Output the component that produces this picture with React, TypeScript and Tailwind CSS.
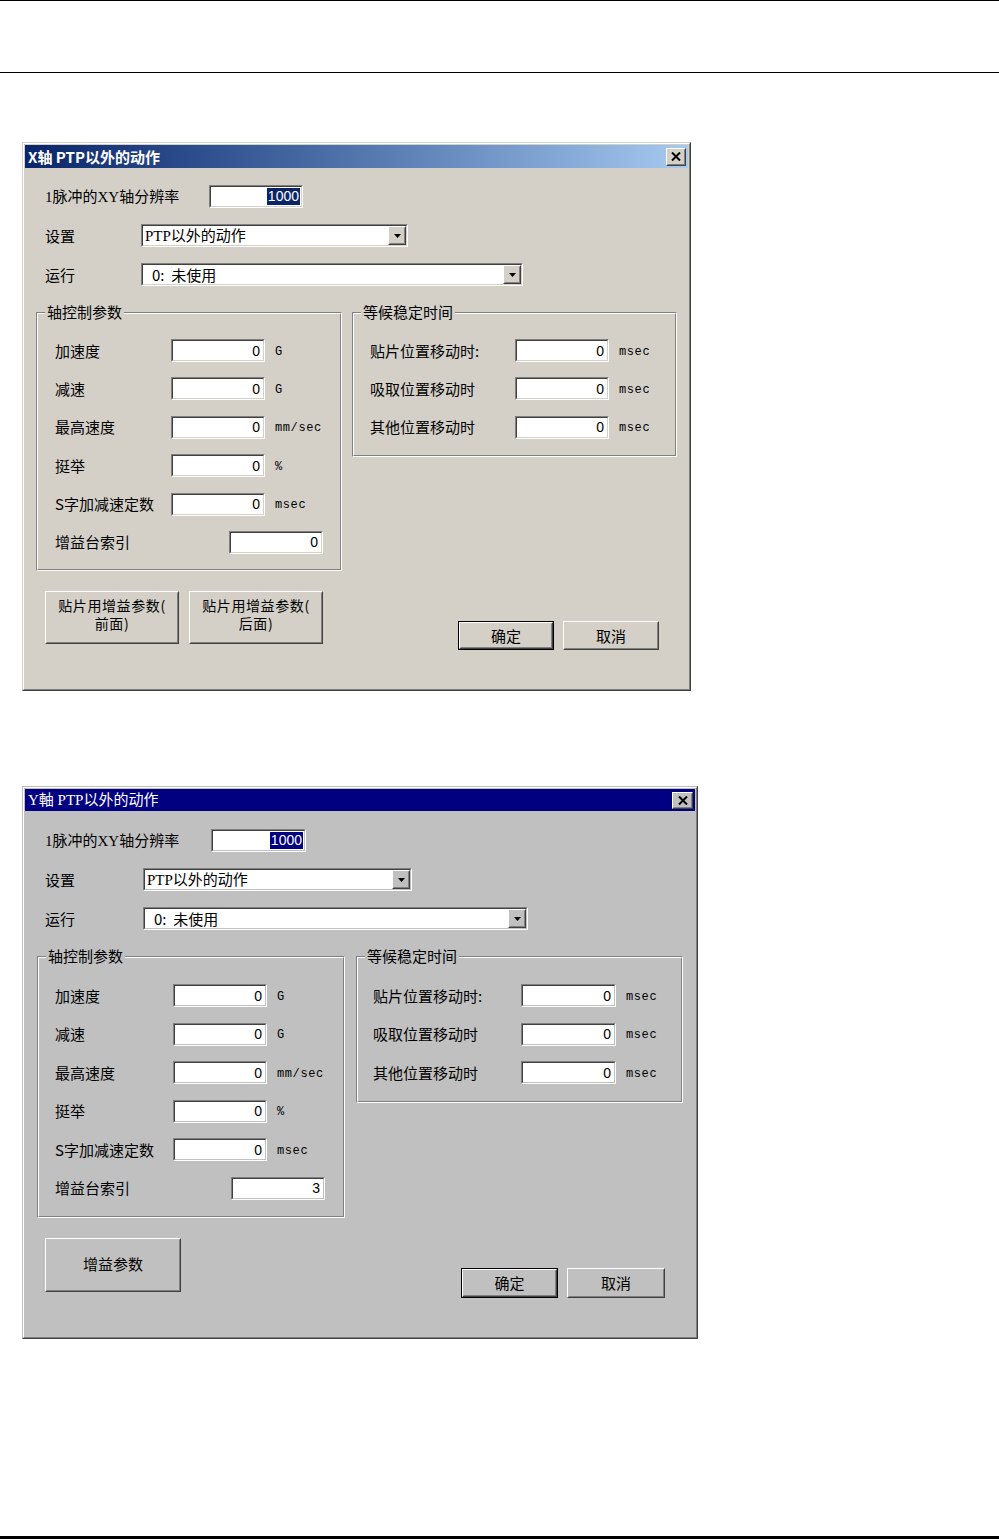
import React from "react";

const CJK = "font-['Noto_Sans_CJK_SC',sans-serif]";
const SERIF = "font-['Liberation_Serif','Noto_Sans_CJK_SC',serif]";
const MONO = "font-['Liberation_Mono',monospace]";
const ARIAL = "font-['Liberation_Sans',sans-serif]";

type P = { className?: string; face: string; bg?: string; children?: React.ReactNode };

function Sunken({ className = "", face, children }: P) {
  return (
    <div className={`border border-t-[#808080] border-l-[#808080] border-b-white border-r-white ${className}`}>
      <div className={`h-full w-full border border-t-[#404040] border-l-[#404040] ${face} bg-white`}>{children}</div>
    </div>
  );
}

function Raised({ className = "", face, bg = "", children }: P) {
  return (
    <div className={`border border-t-white border-l-white border-b-[#404040] border-r-[#404040] ${bg} ${className}`}>
      <div className={`h-full w-full border ${face} border-b-[#808080] border-r-[#808080] flex items-center justify-center`}>
        {children}
      </div>
    </div>
  );
}

function Num({ w, face, v }: { w: string; face: string; v: string }) {
  return (
    <Sunken className={`${w} h-[23px]`} face={face}>
      <div className={`h-full flex items-center justify-end pr-[3px] text-[14px] leading-[16px] text-black ${ARIAL}`}>{v}</div>
    </Sunken>
  );
}

function Combo({
  className,
  face,
  faceTL,
  bg,
  children,
}: {
  className: string;
  face: string;
  faceTL: string;
  bg: string;
  children: React.ReactNode;
}) {
  return (
    <Sunken className={className} face={face}>
      <div className="h-full flex items-stretch">
        <div className={`flex-1 flex items-center text-[15px] leading-[18px] text-black ${SERIF}`}>{children}</div>
        <Raised className="w-[18px]" face={faceTL} bg={bg}>
          <svg width="7" height="4" viewBox="0 0 7 4">
            <polygon points="0,0 7,0 3.5,4" fill="#000" />
          </svg>
        </Raised>
      </div>
    </Sunken>
  );
}

function Group({ className, legend, bg, children }: { className: string; legend: string; bg: string; children: React.ReactNode }) {
  return (
    <div className={`relative border border-t-[#808080] border-l-[#808080] border-b-white border-r-white ${className}`}>
      <div className="h-full border border-t-white border-l-white border-b-[#808080] border-r-[#808080]">{children}</div>
      <div className={`absolute top-[-10px] left-[8px] px-[2px] ${bg} text-[15px] leading-[18px] text-black ${CJK}`}>{legend}</div>
    </div>
  );
}

function Dialog({ second }: { second?: boolean }) {
  const face = second ? "border-b-[#c0c0c0] border-r-[#c0c0c0]" : "border-b-[#d4d0c8] border-r-[#d4d0c8]";
  const faceTL = second ? "border-t-[#c0c0c0] border-l-[#c0c0c0]" : "border-t-[#d4d0c8] border-l-[#d4d0c8]";
  const bg = second ? "bg-[#c0c0c0]" : "bg-[#d4d0c8]";
  const label = `text-[15px] leading-[18px] text-black ${CJK}`;
  const unit = `ml-[10px] mt-[2px] text-[12px] leading-[14px] tracking-[0.6px] text-black ${MONO}`;
  const twoLine = `text-[14px] leading-[15px] tracking-[0.6px] text-black text-center pb-[3px] ${CJK}`;
  const leftRows: [string, string][] = [
    ["加速度", "G"],
    ["减速", "G"],
    ["最高速度", "mm/sec"],
    ["挺举", "%"],
    ["S字加减速定数", "msec"],
  ];
  const rightRows = ["贴片位置移动时:", "吸取位置移动时", "其他位置移动时"];
  const inW = second ? "w-[95px]" : "w-[94px]";

  return (
    <div
      className={`ml-[22px] ${second ? "mt-[95px] w-[676px] h-[553px]" : "mt-[69px] w-[669px] h-[549px]"} border ${faceTL} border-b-[#404040] border-r-[#404040]`}
    >
      <div className={`h-full border border-t-white border-l-white border-b-[#808080] border-r-[#808080] p-px ${bg} flex flex-col`}>
        {/* title bar */}
        <div
          className={`flex items-center justify-between pl-[3px] pr-[2px] ${
            second ? "h-[22px] bg-[#000080]" : "h-[23px] bg-linear-to-r from-[#0a246a] to-[#a6caf0]"
          }`}
        >
          <span
            className={
              second
                ? `text-white text-[15px] leading-[18px] ${SERIF}`
                : `text-white font-bold text-[15px] leading-[18px] ${CJK}`
            }
          >
            {second ? "Y軸 PTP以外的动作" : "X轴 PTP以外的动作"}
          </span>
          <Raised className={second ? "w-[21px] h-[17px]" : "w-[20px] h-[18px]"} face={faceTL} bg={bg}>
            <svg width="10" height="9" viewBox="0 0 10 9">
              <path d="M1 0.5 L9 8.5 M9 0.5 L1 8.5" stroke="#000" strokeWidth="2" />
            </svg>
          </Raised>
        </div>

        {/* body */}
        <div className={`flex flex-col ${second ? "pl-[12px]" : "pl-[11px]"}`}>
          <div className={`flex items-center ${second ? "mt-[18px] pl-[8px]" : "mt-[17px] pl-[9px]"}`}>
            <div className={`${second ? "w-[166px]" : "w-[164px]"} text-[15px] leading-[18px] text-black ${SERIF}`}>
              1脉冲的XY轴分辨率
            </div>
            <Sunken className={`${second ? "w-[95px]" : "w-[94px]"} h-[23px]`} face={face}>
              <div className="h-full flex items-center justify-end pr-[1px]">
                <span
                  className={`px-[1px] text-[14px] leading-[17px] text-white ${ARIAL} ${second ? "bg-[#000080]" : "bg-[#0a246a]"}`}
                >
                  1000
                </span>
              </div>
            </Sunken>
          </div>

          <div className={`flex items-center ${second ? "mt-[16px] pl-[8px]" : "mt-[16px] pl-[9px]"}`}>
            <div className={`${second ? "w-[98px]" : "w-[96px]"} ${label}`}>设置</div>
            <Combo className={second ? "w-[269px] h-[23px]" : "w-[267px] h-[23px]"} face={face} faceTL={faceTL} bg={bg}>
              <span className="pl-[2px]">PTP以外的动作</span>
            </Combo>
          </div>

          <div className={`flex items-center ${second ? "mt-[16px] pl-[8px]" : "mt-[16px] pl-[9px]"}`}>
            <div className={`${second ? "w-[98px]" : "w-[96px]"} ${label}`}>运行</div>
            <Combo className={second ? "w-[385px] h-[23px]" : "w-[382px] h-[23px]"} face={face} faceTL={faceTL} bg={bg}>
              <span className={`pl-[9px] ${CJK}`}>0:&nbsp;&nbsp;未使用</span>
            </Combo>
          </div>

          {/* groups */}
          <div className="flex items-start mt-[26px]">
            <Group className={second ? "w-[308px] h-[262px]" : "w-[306px] h-[259px]"} legend="轴控制参数" bg={bg}>
              <div
                className={`flex flex-col ${second ? "pt-[26px] pl-[16px] gap-[15.6px]" : "pt-[25px] pl-[17px] gap-[15.4px]"}`}
              >
                {leftRows.map(([l, u]) => (
                  <div key={l} className="flex items-center">
                    <div className={`${second ? "w-[118px]" : "w-[116px]"} ${label}`}>{l}</div>
                    <Num w="w-[94px]" face={face} v="0" />
                    <div className={unit}>{u}</div>
                  </div>
                ))}
                <div className="flex items-center">
                  <div className={`${second ? "w-[176px]" : "w-[174px]"} ${label}`}>增益台索引</div>
                  <Num w="w-[94px]" face={face} v={second ? "3" : "0"} />
                </div>
              </div>
            </Group>

            <Group
              className={second ? "ml-[11px] w-[327px] h-[147px]" : "ml-[10px] w-[325px] h-[145px]"}
              legend="等候稳定时间"
              bg={bg}
            >
              <div
                className={`flex flex-col ${second ? "pt-[26px] pl-[15px] gap-[15.6px]" : "pt-[25px] pl-[16px] gap-[15.4px]"}`}
              >
                {rightRows.map((l) => (
                  <div key={l} className="flex items-center">
                    <div className={`${second ? "w-[148px]" : "w-[145px]"} ${label}`}>{l}</div>
                    <Num w={inW} face={face} v="0" />
                    <div className={unit}>msec</div>
                  </div>
                ))}
              </div>
            </Group>
          </div>

          {/* buttons */}
          <div className={`flex items-start mt-[20px] ${second ? "pl-[8px]" : "pl-[9px]"}`}>
            {second ? (
              <Raised className="w-[136px] h-[54px]" face={faceTL}>
                <span className={`${label} pb-[3px]`}>增益参数</span>
              </Raised>
            ) : (
              <>
                <Raised className="w-[134px] h-[53px]" face={faceTL}>
                  <div className="flex flex-col items-center pb-[3px]">
                    <span className={twoLine}>贴片用增益参数(</span>
                    <span className={twoLine}>前面)</span>
                  </div>
                </Raised>
                <Raised className="ml-[10px] w-[134px] h-[53px]" face={faceTL}>
                  <div className="flex flex-col items-center pb-[3px]">
                    <span className={twoLine}>贴片用增益参数(</span>
                    <span className={twoLine}>后面)</span>
                  </div>
                </Raised>
              </>
            )}
            <div
              className={`border border-black mt-[30px] ${second ? "ml-[280px] w-[97px] h-[30px]" : "ml-[135px] w-[96px] h-[29px]"}`}
            >
              <Raised className="h-full w-full" face={faceTL}>
                <span className={label}>确定</span>
              </Raised>
            </div>
            <Raised
              className={`mt-[30px] ml-[9px] ${second ? "w-[98px] h-[30px]" : "w-[96px] h-[29px]"}`}
              face={faceTL}
            >
              <span className={label}>取消</span>
            </Raised>
          </div>
        </div>
      </div>
    </div>
  );
}

export default function App() {
  return (
    <div className="w-full h-[1539px] bg-white flex flex-col overflow-hidden">
      <div className="h-px bg-black" />
      <div className="h-[71px]" />
      <div className="h-px bg-black" />
      <Dialog />
      <Dialog second />
      <div className="mt-auto h-[3px] bg-black" />
    </div>
  );
}
